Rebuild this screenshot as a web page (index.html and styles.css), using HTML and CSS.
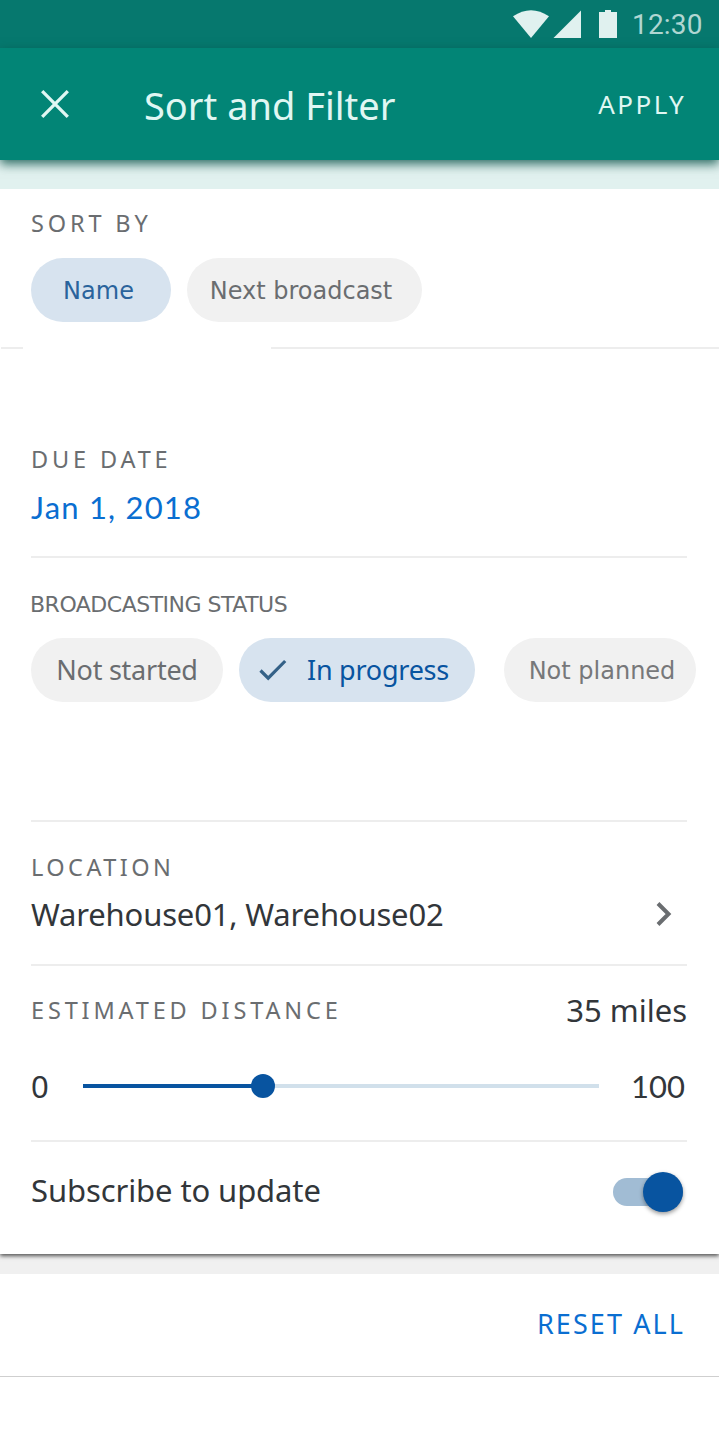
FILE: index.html
```
<!DOCTYPE html>
<html lang="en">
<head>
<meta charset="utf-8">
<title>Sort and Filter</title>
<link rel="stylesheet" href="styles.css">
</head>
<body>
<div class="statusbar">
  <svg class="signals" width="104" height="28" viewBox="0 0 104 28" fill="#e0f1ef"><path d="M0 6.3Q18-5.8 36 6.3L18 28Z"/><path d="M40.500 28H68V0.500Z"/><path d="M86 2h6V0h6v2h6v26H86Z"/></svg>
  <span class="clock">12:30</span>
</div>
<header class="appbar">
  <svg class="close" width="28" height="28" viewBox="0 0 28 28"><path d="M1.200 1.200L26.800 26.800M26.800 1.200L1.200 26.800" stroke="#e0f7f3" stroke-width="3.300" fill="none"/></svg>
  <h1 class="title">Sort and Filter</h1>
  <span class="apply">APPLY</span>
</header>
<div class="strip"></div>
<main class="sheet">
  <section class="sort">
    <h2 class="label sort-label">SORT BY</h2>
    <div class="chips">
      <span class="chip chip-on chip-name">Name</span>
      <span class="chip chip-next">Next broadcast</span>
    </div>
  </section>
  <div class="rule-split"><span class="rule-short"></span><span class="rule-long"></span></div>
  <section class="due">
    <h2 class="label due-label">DUE DATE</h2>
    <div class="value date">Jan 1, 2018</div>
  </section>
  <section class="broadcast">
    <h2 class="label tight">BROADCASTING STATUS</h2>
    <div class="chips">
      <span class="chip chip-started">Not started</span>
      <span class="chip chip-on chip-progress"><svg width="28" height="22" viewBox="0 0 28 22"><path d="M1.500 11.500L9.200 19.200L26.200 2" stroke="#346187" stroke-width="3.200" fill="none"/></svg>In progress</span>
      <span class="chip chip-planned">Not planned</span>
    </div>
  </section>
  <section class="location">
    <h2 class="label location-label">LOCATION</h2>
    <div class="row">
      <span class="value places">Warehouse01, Warehouse02</span>
      <svg class="chevron" width="16" height="24" viewBox="0 0 16 24"><path d="M2 1.500L12.500 12L2 22.500" stroke="#6a6d70" stroke-width="4" fill="none"/></svg>
    </div>
  </section>
  <section class="distance">
    <div class="row">
      <h2 class="label distance-label">ESTIMATED DISTANCE</h2>
      <span class="value miles">35 miles</span>
    </div>
    <div class="range">
      <span class="value min">0</span>
      <div class="track"><div class="fill"></div><div class="thumb"></div></div>
      <span class="value max">100</span>
    </div>
  </section>
  <section class="subscribe">
    <span class="value sub-text">Subscribe to update</span>
    <div class="switch"><div class="knob"></div></div>
  </section>
</main>
<footer class="footer"><span class="reset">RESET ALL</span></footer>
</body>
</html>
```
FILE: styles.css
```
* { box-sizing: border-box; }
body { margin: 0; background: #fff; color: #32363a; font-family: "Noto Sans", sans-serif; height: 1437px; overflow: hidden; }
h1, h2 { margin: 0; font-weight: 400; }
svg { display: block; flex: none; }
span, h1, h2 { white-space: nowrap; }

.statusbar { height: 48px; background: #06786e; display: flex; align-items: flex-start; padding: 10px 16px 0 513px; }
.clock { margin: -1px 0 0 15px; font: 28px/32px Roboto, sans-serif; letter-spacing: .2px; color: #b0d6d2; }

.appbar { position: relative; z-index: 2; height: 112px; padding: 0 33px 0 41px; display: flex; align-items: center; background: #028576; box-shadow: 0 4px 10px rgba(0, 75, 65, .8); color: #e0f7f3; }
.title { margin: 2px 0 0 75px; font-size: 38px; line-height: 52px; }
.apply { margin-left: auto; font-size: 26px; line-height: 34px; letter-spacing: 2.400px; }
.strip { position: relative; z-index: 1; height: 29px; background: #e1f1ef; }

.sheet { height: 1065px; background: #fff; box-shadow: 0 2px 4px rgba(0, 0, 0, .65); position: relative; }
.label { font-size: 23.500px; line-height: 32px; letter-spacing: 3.850px; color: #6a6d70; }
.location-label { letter-spacing: 3.450px; }
.value { font-size: 31px; line-height: 42px; }
.row { display: flex; align-items: center; justify-content: space-between; }

.sort { height: 158px; padding: 18px 31px 0; }
.chips { display: flex; }
.chip { height: 64px; border-radius: 32px; background: #f1f1f1; color: #6a6d70; display: flex; align-items: center; justify-content: center; font-size: 27px; line-height: 36px; letter-spacing: -.25px; }
.chip-on { background: #d7e3ef; color: #0854a0; }
.sort .chips { margin-top: 19px; gap: 16px; }
.chip-name, .chip-next, .chip-planned { font: 24px/30px "DejaVu Sans", sans-serif; letter-spacing: 0; padding-top: 1px; }
.chip-name { width: 140px; padding-right: 5px; color: #2a639c; }
.chip-next { width: 235px; padding-right: 7px; }
.rule-split { display: flex; justify-content: space-between; height: 2px; padding-left: 1px; }
.rule-short { width: 22px; background: #ededed; }
.rule-long { width: 448px; background: #ededed; }

.due, .broadcast, .location, .distance { margin: 0 32px 0 31px; border-bottom: 2px solid #ededed; }
.due { height: 209px; padding-top: 94px; }
.date { margin-top: 11px; color: #0a6ed1; font-family: Lato, sans-serif; letter-spacing: 1.200px; }
.broadcast { height: 264px; padding-top: 31px; }
.tight { margin-left: -1px; font: 22px/32px "DejaVu Sans", sans-serif; letter-spacing: -.500px; }
.broadcast .chips { margin-top: 17px; }
.chip-started { width: 192px; flex: none; }
.chip-progress { width: 236px; flex: none; margin-left: 16px; justify-content: flex-start; padding-left: 20px; gap: 20px; }
.chip-planned { width: 192px; flex: none; margin-left: 29px; padding-left: 4px; color: #77787a; }
.location { height: 144px; padding-top: 29px; }
.location .row { margin-top: 10px; }
.places { letter-spacing: -.170px; }
.chevron { margin-right: 15px; }
.distance { height: 176px; padding-top: 23px; }
.range { display: flex; align-items: center; margin-top: 34px; padding-right: 2px; }
.min { width: 52px; }
.max { margin-left: auto; font-family: Lato, sans-serif; }
.track { position: relative; width: 516px; height: 4px; background: #d1e0eb; }
.fill { width: 180px; height: 4px; background: #0854a0; }
.thumb { position: absolute; left: 168px; top: -10px; width: 24px; height: 24px; border-radius: 50%; background: #0854a0; }
.subscribe { height: 112px; padding: 0 36px 12px 31px; display: flex; align-items: center; justify-content: space-between; }
.sub-text { margin-top: -4px; letter-spacing: -.100px; }
.switch { position: relative; width: 70px; height: 28px; border-radius: 14px; background: #a1bcd4; }
.knob { position: absolute; right: 0; top: -6px; width: 40px; height: 40px; border-radius: 50%; background: #0854a0; box-shadow: 0 2px 4px rgba(0, 0, 0, .4); }

.footer { height: 123px; border-top: 20px solid #f0f0f0; border-bottom: 1px solid #cfcfcf; padding: 0 34px 3px 0; display: flex; align-items: center; justify-content: flex-end; }
.reset { font-size: 27px; line-height: 36px; letter-spacing: 2.100px; color: #0a6ed1; }
```
